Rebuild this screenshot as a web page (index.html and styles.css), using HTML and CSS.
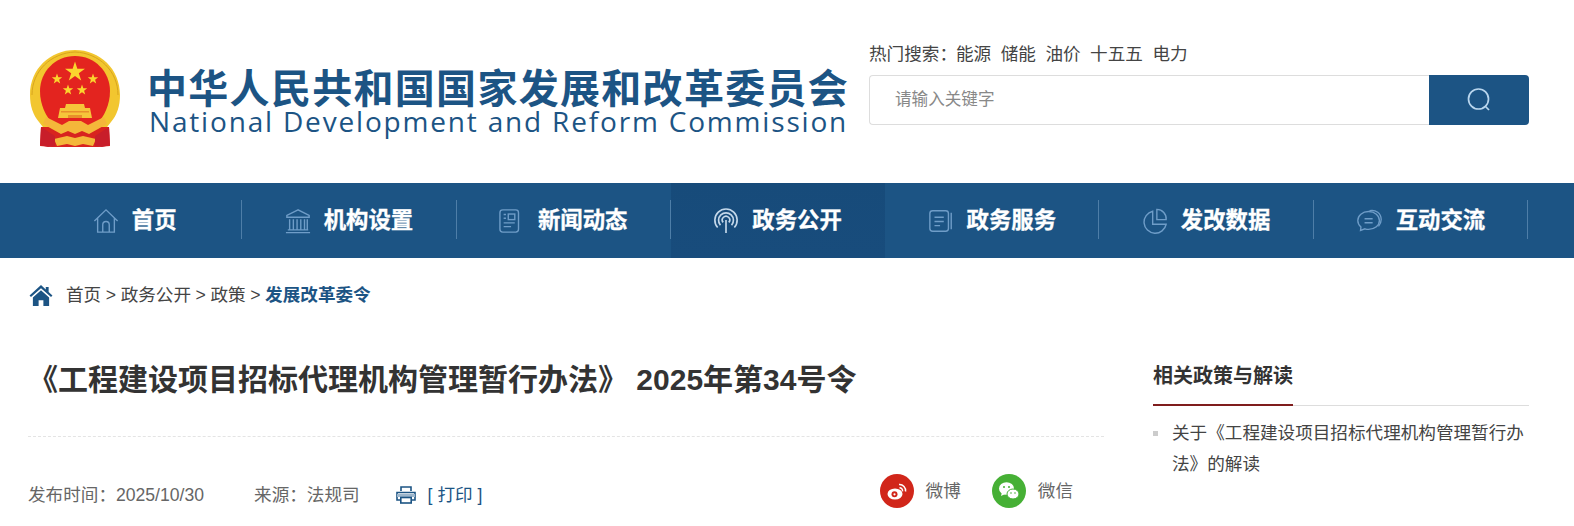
FILE: index.html
```html
<!DOCTYPE html>
<html lang="zh-CN">
<head>
<meta charset="utf-8">
<title>国家发展和改革委员会</title>
<link rel="stylesheet" href="styles.css">
</head>
<body>
<header class="header">
  <div class="brand">
    <svg class="emblem" viewBox="0 0 94 100" width="94" height="100" aria-hidden="true">
      <defs>
        <polygon id="st" points="0,-5.500 1.300,-1.800 5.200,-1.700 2.100,.7 3.200,4.450 0,2.200 -3.200,4.450 -2.100,.7 -5.200,-1.700 -1.300,-1.800" fill="#fbd52e"/>
      </defs>
      <path d="M47 1C22 1 2 20 2 46c0 11 3 20 9 27l7 9h58l7-9c6-7 9-16 9-27C92 20 72 1 47 1z" fill="#f2c62f"/>
      <path d="M4 46C4 22 23 4 47 3c24 1 43 19 43 43" fill="none" stroke="#d8a51e" stroke-width="1"/>
      <path d="M47 7C27 7 12 23 12 42c0 14 6 26 14 34h42c8-8 14-20 14-34C82 23 67 7 47 7z" fill="#e3241f"/>
      <polygon points="47,12.500 49.350,19.760 57,19.760 50.800,24.240 53.200,31.500 47,27 40.800,31.500 43.200,24.240 37,19.760 44.650,19.760" fill="#fbd52e"/>
      <use href="#st" x="29" y="30"/>
      <use href="#st" x="65" y="30"/>
      <use href="#st" x="40" y="41"/>
      <use href="#st" x="54" y="41"/>
      <path d="M38 55h18l1 4h5l2 10H30l2-10h5z" fill="#f6c53a"/>
      <path d="M33 62h28v1.500H33zM40 66h14v3H40z" fill="#e8902a"/>
      <path d="M13 78h68l1 19-12 1H24l-12-1z" fill="#d8231f"/>
      <path d="M18 68l16 8 7-4h12l7 4 16-8 3 7-18 10-7-3-7 3-7-3-7 3-18-10z" fill="#f4b73a"/>
      <path d="M26 90l13-3 8 2 8-2 13 3-3 7-10-2-8 2-8-2-10 2z" fill="#f4b73a"/>
      <path d="M13 78l14 9v10l-7 1-8-2zM81 78l-14 9v10l7 1 8-2z" fill="#c81e2a"/>
    </svg>
    <div class="brand-text">
      <div class="brand-cn">中华人民共和国国家发展和改革委员会</div>
      <div class="brand-en">National Development and Reform Commission</div>
    </div>
  </div>
  <div class="search">
    <div class="hot">
      <span class="hot-label">热门搜索：</span>
      <a>能源</a><a>储能</a><a>油价</a><a>十五五</a><a>电力</a>
    </div>
    <form class="search-box">
      <div class="search-input">请输入关键字</div>
      <div class="search-btn">
        <svg viewBox="0 0 26 26" width="26" height="26" aria-hidden="true"><circle cx="12.500" cy="12" r="10" fill="none" stroke="#b9d6ee" stroke-width="1.700"/><path d="M19 19l4 4" stroke="#b9d6ee" stroke-width="1.700" fill="none"/></svg>
      </div>
    </form>
  </div>
</header>

<nav class="nav">
  <a class="nav-item">
    <svg class="nav-icon" viewBox="0 0 28 28" aria-hidden="true"><path d="M1.500 14L14 2l12.500 12M5 11v15h18V11M10.500 26v-8a3.500 3.500 0 0 1 7 0v8"/></svg>
    <span class="nav-text">首页</span>
  </a>
  <a class="nav-item">
    <svg class="nav-icon" viewBox="0 0 28 28" aria-hidden="true"><path d="M14 2L2 8v2h24V8zM5 12v11M9 12v11M13 12v11M17 12v11M21 12v11M24 12v11M3 23.500h22M1 26.500h26"/></svg>
    <span class="nav-text">机构设置</span>
  </a>
  <a class="nav-item">
    <svg class="nav-icon" viewBox="0 0 28 28" aria-hidden="true"><rect x="1" y="2" width="20" height="24" rx="3"/><rect x="10" y="6.500" width="7" height="6"/><path d="M5 7h2.500M5 11h2.500M5 16h12M5 20h8"/></svg>
    <span class="nav-text">新闻动态</span>
  </a>
  <a class="nav-item active">
    <svg class="nav-icon nav-icon-bright" viewBox="0 0 28 28" aria-hidden="true"><path d="M5 21a12 12 0 1 1 18 0M8 18.500a8 8 0 1 1 12 0M11 15.500a4 4 0 1 1 6 0M14 13v14"/></svg>
    <span class="nav-text">政务公开</span>
  </a>
  <a class="nav-item">
    <svg class="nav-icon" viewBox="0 0 28 28" aria-hidden="true"><rect x="2" y="3" width="20" height="22" rx="3"/><path d="M7 10h10M7 14.500h10M7 19h6M25 5v18"/></svg>
    <span class="nav-text">政务服务</span>
  </a>
  <a class="nav-item">
    <svg class="nav-icon" viewBox="0 0 28 28" aria-hidden="true"><path d="M11.500 3.500A12 12 0 1 0 26 17.500H11.500z"/><path d="M16 1.500a10 10 0 0 1 10 11h-10z"/></svg>
    <span class="nav-text">发改数据</span>
  </a>
  <a class="nav-item">
    <svg class="nav-icon nav-icon-wide" viewBox="0 0 30 28" aria-hidden="true"><path d="M14 4C7 4 2 8.500 2 14c0 3 1.500 5.500 3.500 7.200L5 25l5-1.800c1.300.4 2.700.6 4 .6 7 0 12-4.300 12-9.800S21 4 14 4z"/><path d="M15 3c7-1.500 13 3 13 10 0 3-1.200 5.500-3 7.500M9.500 12h9M9.500 16.500h9"/></svg>
    <span class="nav-text">互动交流</span>
  </a>
</nav>

<div class="crumbs">
  <svg class="crumb-home" viewBox="0 0 24 22" width="24" height="21" aria-hidden="true"><path d="M12 0L0 11l1.500 1.700L12 3.300l10.500 9.400L24 11l-4-3.600V2h-3v2.700z" fill="#1c5484"/><path d="M12 5.500L3.500 13v9h6v-6h5v6h6v-9z" fill="#1c5484"/></svg>
  <span class="crumb-path">首页 &gt; 政务公开 &gt; 政策 &gt; <b>发展改革委令</b></span>
</div>

<main class="content">
  <article class="article">
    <h1 class="title">《工程建设项目招标代理机构管理暂行办法》 2025年第34号令</h1>
    <div class="meta">
      <div class="meta-left">
        <span>发布时间：2025/10/30</span>
        <span>来源：法规司</span>
        <a class="print">
          <svg viewBox="0 0 20 18" width="20" height="18" aria-hidden="true"><path d="M5 5V1h10v4M4 14H1V6.500h18V14h-3" fill="none" stroke="#1c5484" stroke-width="1.600"/><rect x="1" y="8" width="18" height="3" fill="#9db6cc"/><rect x="4.800" y="11.500" width="10.400" height="5.500" fill="none" stroke="#1c5484" stroke-width="1.600"/></svg>
          <span>[ 打印 ]</span>
        </a>
      </div>
      <div class="share">
        <a class="share-item">
          <span class="share-dot weibo">
            <svg viewBox="0 0 24 24" width="24" height="24" aria-hidden="true"><ellipse cx="10" cy="15" rx="7.500" ry="5.500" fill="#fff"/><circle cx="9.500" cy="15.300" r="3" fill="#d1261a"/><circle cx="9.500" cy="15.300" r="1.100" fill="#fff"/><path d="M14 5.500a6 6 0 0 1 6.500 7M14.500 8.800a3 3 0 0 1 3 3.500" fill="none" stroke="#fff" stroke-width="1.500"/></svg>
          </span>
          <span>微博</span>
        </a>
        <a class="share-item">
          <span class="share-dot wechat">
            <svg viewBox="0 0 24 24" width="24" height="24" aria-hidden="true"><ellipse cx="9.500" cy="9.500" rx="7.500" ry="6.300" fill="#fff"/><path d="M5 13l-1 4 4-2z" fill="#fff"/><ellipse cx="16" cy="15" rx="6" ry="5" fill="#fff" stroke="#46b035" stroke-width="1"/><circle cx="7" cy="8" r="1" fill="#46b035"/><circle cx="12" cy="8" r="1" fill="#46b035"/><circle cx="14" cy="14" r=".8" fill="#46b035"/><circle cx="18" cy="14" r=".8" fill="#46b035"/></svg>
          </span>
          <span>微信</span>
        </a>
      </div>
    </div>
  </article>
  <aside class="side">
    <div class="side-head"><h2>相关政策与解读</h2></div>
    <ul class="side-list">
      <li>关于《工程建设项目招标代理机构管理暂行办法》的解读</li>
    </ul>
  </aside>
</main>
</body>
</html>
```
FILE: styles.css
```css
* { box-sizing: border-box; }
html, body { margin: 0; padding: 0; }
body {
  background: #fff;
  color: #333;
  font-family: "Liberation Sans", "Noto Sans CJK SC", sans-serif;
  font-size: 17.6px;
  height: 526px;
  overflow: hidden;
}
a { color: inherit; text-decoration: none; }

.header {
  height: 183px;
  padding: 0 45px 0 28px;
  display: flex;
  justify-content: space-between;
}
.brand { display: flex; align-items: flex-start; padding-top: 49px; }
.emblem { flex: none; }
.brand-text { margin-left: 25px; padding-top: 18px; color: #1c5484; }
.brand-cn {
  font-family: "Noto Sans CJK SC", sans-serif;
  font-weight: 700;
  font-size: 40px;
  letter-spacing: 1.300px;
  line-height: 38px;
  height: 38px;
  white-space: nowrap;
}
.brand-en {
  font-family: "Open Sans", sans-serif;
  font-size: 28px;
  letter-spacing: 1.820px;
  line-height: 32px;
  margin: 0 0 0 2px;
  white-space: nowrap;
}

.search { width: 660px; flex: none; padding-top: 42px; }
.hot {
  height: 33px;
  line-height: 24px;
  color: #444;
  font-size: 17.6px;
  display: flex;
  white-space: nowrap;
}
.hot-label { margin-right: -1px; }
.hot a { margin-right: 9.500px; }
.search-box { display: flex; height: 50px; }
.search-input {
  flex: 1;
  border: 1px solid #ddd;
  border-right: 0;
  border-radius: 4px 0 0 4px;
  padding-left: 25px;
  line-height: 48px;
  font-size: 16.600px;
  color: #888;
}
.search-btn {
  width: 100px;
  background: #1c5484;
  border-radius: 0 4px 4px 0;
  display: flex;
  align-items: center;
  justify-content: center;
}

.nav {
  height: 75px;
  padding-left: 28px;
  background: #1c5484;
  display: flex;
  align-items: stretch;
}
.nav-item {
  position: relative;
  width: 214.300px;
  display: flex;
  align-items: center;
  justify-content: center;
  gap: 13px;
  color: #fff;
  font-family: "Noto Sans CJK SC", sans-serif;
  font-weight: 700;
  font-size: 22.400px;
}
.nav-text { padding-bottom: 6px; margin-right: 1px; -webkit-text-stroke: 0.300px #fff; }
.nav-item::after {
  content: "";
  position: absolute;
  right: 0;
  top: 17px;
  height: 39px;
  width: 1px;
  background: #4e7ea8;
}
.nav-item.active { background: linear-gradient(#174b7a, #184c7c); }
.nav-item.active::after { display: none; }
.nav-icon {
  width: 26px;
  height: 26px;
  fill: none;
  stroke: #6f9dc8;
  stroke-width: 1.500;
  flex: none;
}
.nav-icon-bright { stroke: #c4d8ea; stroke-width: 1.800; }
.nav-icon-wide { width: 27px; height: 27px; }

.crumbs {
  height: 76px;
  display: flex;
  align-items: center;
  padding-left: 29px;
  gap: 13px;
  color: #444;
}
.crumb-home { margin-bottom: 2px; }
.crumb-path { padding-bottom: 6px; word-spacing: -0.300px; }
.crumb-path b { color: #1c5484; font-weight: 700; }

.content {
  display: flex;
  justify-content: space-between;
  padding: 0 45px 0 29px;
}
.article { width: 1075px; }
.title {
  margin: 0 0 0 -1px;
  padding-top: 25px;
  height: 103px;
  border-bottom: 1px dashed #e4e4e4;
  font-family: "Liberation Sans", "Noto Sans CJK SC", sans-serif;
  font-size: 30px;
  line-height: 42px;
  font-weight: 700;
  color: #333;
  white-space: nowrap;
}
.meta {
  display: flex;
  justify-content: space-between;
  align-items: flex-start;
  padding: 37px 31px 0 0;
  color: #666;
  line-height: 34px;
}
.meta-left { display: flex; align-items: center; gap: 50px; margin: 4px 0 0 -1px; }
.print {
  display: flex;
  align-items: center;
  gap: 12px;
  color: #1c5484;
  margin-left: -14px;
}
.share { display: flex; gap: 31px; }
.share-item { display: flex; align-items: center; gap: 12px; }
.share-dot {
  width: 34px;
  height: 34px;
  border-radius: 50%;
  display: flex;
  align-items: center;
  justify-content: center;
}
.weibo { background: #d1261a; }
.wechat { background: #46b035; }

.side { width: 376px; padding-top: 25px; }
.side-head { border-bottom: 1px solid #ddd; height: 47px; }
.side-head h2 {
  display: inline-block;
  margin: 0;
  height: 47px;
  font-size: 20px;
  line-height: 34px;
  font-weight: 700;
  border-bottom: 2px solid #7f1d1d;
  color: #333;
}
.side-list { list-style: none; margin: 12px 0 0; padding: 0; }
.side-list li {
  position: relative;
  padding-left: 19px;
  line-height: 31px;
  font-size: 17.6px;
  color: #444;
}
.side-list li::before {
  content: "";
  position: absolute;
  left: 0;
  top: 13px;
  width: 5px;
  height: 5px;
  background: #ccc;
}
```
